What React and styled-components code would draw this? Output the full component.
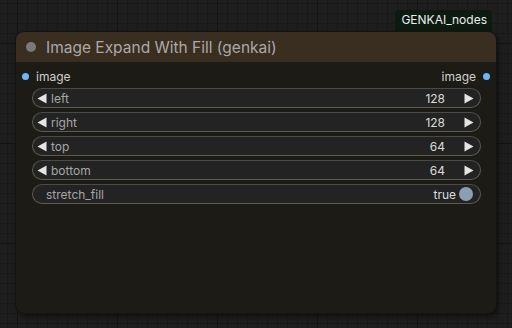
import React from 'react';
import styled, { createGlobalStyle } from 'styled-components';

const GlobalStyle = createGlobalStyle`
  html, body {
    margin: 0;
    padding: 0;
    width: 512px;
    height: 328px;
    overflow: hidden;
  }
  body {
    font-family: Inter, "Liberation Sans", Arial, sans-serif;
  }
`;

const Canvas = styled.div`
  width: 512px;
  height: 328px;
  box-sizing: border-box;
  padding: 10px 16px 0 16px;
  background-color: #1e1e1e;
  background-image:
    linear-gradient(to right, #141414 1px, transparent 1px),
    linear-gradient(to bottom, #141414 1px, transparent 1px),
    linear-gradient(to right, rgba(0,0,0,0.18) 1px, transparent 1px),
    linear-gradient(to bottom, rgba(0,0,0,0.18) 1px, transparent 1px);
  background-size: 100px 100px, 100px 100px, 10px 10px, 10px 10px;
  background-position: 17px 43px, 17px 43px, 7px 3px, 7px 3px;
  display: flex;
  flex-direction: column;
`;

const BadgeRow = styled.div`
  display: flex;
  justify-content: flex-end;
  padding-right: 4px;
`;

const Badge = styled.div`
  background: #0c1a10;
  color: #ececec;
  font-size: 12px;
  padding: 0 5px 0 6px;
  height: 22px;
  line-height: 20px;
  border-radius: 4px 4px 0 0;
`;

const Node = styled.div`
  width: 480px;
  height: 281px;
  background: #1c1b15;
  border-radius: 8px;
  box-shadow: 0 0 0 1px #15140f, 2px 3px 6px rgba(0,0,0,0.55);
  display: flex;
  flex-direction: column;
  overflow: hidden;
`;

const TitleBar = styled.div`
  height: 30px;
  background: #3a2e21;
  display: flex;
  align-items: center;
  padding-left: 10px;
  gap: 10px;
  color: #a9a9a9;
  font-size: 15.5px;
`;

const TitleDot = styled.span`
  width: 10px;
  height: 10px;
  border-radius: 50%;
  background: #7a7a7a;
`;

const Body = styled.div`
  display: flex;
  flex-direction: column;
  padding: 6px 0 0 0;
`;

const SlotRow = styled.div`
  height: 16px;
  display: flex;
  align-items: center;
  justify-content: space-between;
  padding: 0 6px;
  color: #cfcfcf;
  font-size: 12px;
  margin-bottom: 4px;
`;

const Slot = styled.div`
  display: flex;
  align-items: center;
  gap: 7px;
  flex-direction: ${p => (p.$right ? 'row-reverse' : 'row')};
`;

const SlotDot = styled.span`
  width: 7px;
  height: 7px;
  border-radius: 50%;
  background: #6cb8f6;
`;

const Widgets = styled.div`
  display: flex;
  flex-direction: column;
  gap: 4px;
  padding: 0 15px 0 16px;
`;

const Widget = styled.div`
  height: 20px;
  box-sizing: border-box;
  border-radius: 10px;
  background: #232323;
  border: 1px solid #5c5b53;
  border-top-color: #4a4a46;
  display: flex;
  align-items: center;
  padding: ${p => (p.$toggle ? '0 7px 0 13px' : '0 6px 0 4px')};
  font-size: 12px;
  color: #a6a6a6;
`;

const Label = styled.span`
  flex: 1;
  padding-left: ${p => (p.$toggle ? '0' : '4px')};
`;

const Value = styled.span`
  color: #dcdcdc;
  padding-right: ${p => (p.$toggle ? '3px' : '19px')};
`;

const Knob = styled.span`
  width: 14px;
  height: 14px;
  border-radius: 50%;
  background: #8d9db2;
`;

const Arrow = ({ dir }) => (
  <svg width="10" height="11" viewBox="0 0 10 11">
    {dir === 'left' ? (
      <polygon points="9.5,0.5 9.5,10.5 0.5,5.5" fill="#e4e4e4" />
    ) : (
      <polygon points="0.5,0.5 0.5,10.5 9.5,5.5" fill="#e4e4e4" />
    )}
  </svg>
);

const numbers = [
  { name: 'left', value: 128 },
  { name: 'right', value: 128 },
  { name: 'top', value: 64 },
  { name: 'bottom', value: 64 },
];

export default function App() {
  return (
    <>
      <GlobalStyle />
      <Canvas>
        <BadgeRow>
          <Badge>GENKAI_nodes</Badge>
        </BadgeRow>
        <Node>
          <TitleBar>
            <TitleDot />
            Image Expand With Fill (genkai)
          </TitleBar>
          <Body>
            <SlotRow>
              <Slot>
                <SlotDot />
                image
              </Slot>
              <Slot $right>
                <SlotDot />
                image
              </Slot>
            </SlotRow>
            <Widgets>
              {numbers.map(n => (
                <Widget key={n.name}>
                  <Arrow dir="left" />
                  <Label>{n.name}</Label>
                  <Value>{n.value}</Value>
                  <Arrow dir="right" />
                </Widget>
              ))}
              <Widget $toggle>
                <Label $toggle>stretch_fill</Label>
                <Value $toggle>true</Value>
                <Knob />
              </Widget>
            </Widgets>
          </Body>
        </Node>
      </Canvas>
    </>
  );
}
